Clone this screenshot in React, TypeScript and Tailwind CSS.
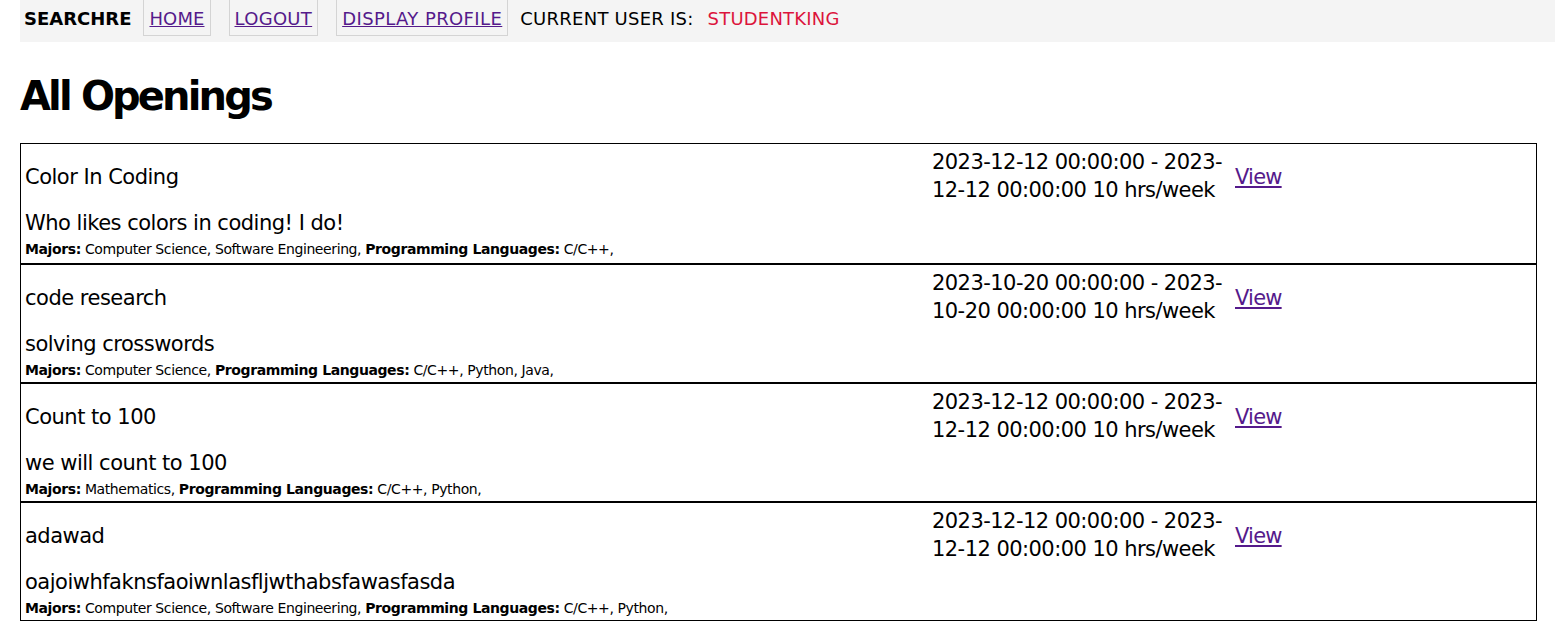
import React from "react";

const rows = [
  {
    title: "Color In Coding",
    date1: "2023-12-12 00:00:00 - 2023-",
    date2: "12-12 00:00:00 10 hrs/week",
    desc: "Who likes colors in coding! I do!",
    majors: "Computer Science, Software Engineering,",
    langs: "C/C++,",
  },
  {
    title: "code research",
    date1: "2023-10-20 00:00:00 - 2023-",
    date2: "10-20 00:00:00 10 hrs/week",
    desc: "solving crosswords",
    majors: "Computer Science,",
    langs: "C/C++, Python, Java,",
  },
  {
    title: "Count to 100",
    date1: "2023-12-12 00:00:00 - 2023-",
    date2: "12-12 00:00:00 10 hrs/week",
    desc: "we will count to 100",
    majors: "Mathematics,",
    langs: "C/C++, Python,",
  },
  {
    title: "adawad",
    date1: "2023-12-12 00:00:00 - 2023-",
    date2: "12-12 00:00:00 10 hrs/week",
    desc: "oajoiwhfaknsfaoiwnlasfljwthabsfawasfasda",
    majors: "Computer Science, Software Engineering,",
    langs: "C/C++, Python,",
  },
];

export default function App() {
  return (
    <div
      className="min-h-[635px] bg-white pl-[20px] text-black"
      style={{ fontFamily: '"DejaVu Sans", Verdana, sans-serif' }}
    >
      <nav className="flex h-[42px] items-start bg-[#f4f4f4] text-[18px]">
        <span className="ml-[4px] mt-[5px] font-bold tracking-[0px]">SEARCHRE</span>
        <a className="ml-[12px] h-[36px] border border-t-0 border-[#d4d4d4] px-[5px] pt-[5px] text-[#551a8b] underline tracking-[0.1px]" href="#">
          HOME
        </a>
        <a className="ml-[18px] h-[36px] border border-t-0 border-[#d4d4d4] px-[5px] pt-[5px] text-[#551a8b] underline tracking-[0.3px]" href="#">
          LOGOUT
        </a>
        <a className="ml-[18px] h-[36px] border border-t-0 border-[#d4d4d4] px-[5px] pt-[5px] text-[#551a8b] underline tracking-[0.4px]" href="#">
          DISPLAY PROFILE
        </a>
        <span className="ml-[12px] mt-[5px] tracking-[0.25px]">CURRENT USER IS:</span>
        <span className="ml-[14px] mt-[5px] text-[#dc143c] tracking-[0.2px]">STUDENTKING</span>
      </nav>
      <h1 className="mt-[30px] text-[40px] font-bold leading-[48px] tracking-[-2.85px]">All Openings</h1>
      <div className="mr-[18px] mt-[23px] border border-black">
        {rows.map((r, i) => (
          <div key={i} className={`h-[119px] border-black ${i > 0 ? "border-t-2" : ""}`}>
            <div className="flex pt-[4px]">
              <div className="flex flex-1 items-center pl-[4px] pt-[3px] text-[21px] tracking-[-0.5px]">{r.title}</div>
              <div className="w-[300px] text-[21px] leading-[28px] tracking-[-0.55px]">
                <div>{r.date1}</div>
                <div>{r.date2}</div>
              </div>
              <div className="flex w-[304px] items-center pl-[3px] pt-[4px] text-[21px] tracking-[-0.8px]">
                <a href="#" className="text-[#551a8b] underline">View</a>
              </div>
            </div>
            <div className="mt-[5px] pl-[4px] text-[21px] leading-[28px] tracking-[-0.5px]">{r.desc}</div>
            <div className="mt-[3px] pl-[4px] text-[14px] leading-[18px] tracking-[-0.4px]">
              <b>Majors:</b> {r.majors} <b>Programming Languages:</b> {r.langs}
            </div>
          </div>
        ))}
      </div>
    </div>
  );
}
